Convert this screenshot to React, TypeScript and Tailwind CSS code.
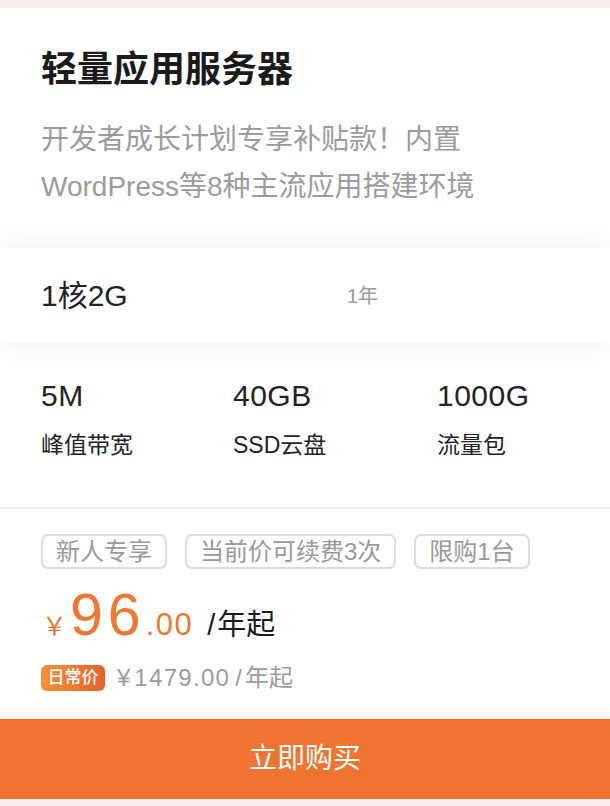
import React from "react";

const FONT = { fontFamily: '"Liberation Sans", "Noto Sans CJK SC", sans-serif' };

export default function App() {
  return (
    <div className="w-[610px] min-h-[806px] bg-[#f7eaea] flex flex-col" style={FONT}>
      <div className="h-[8px]" />
      <div className="bg-white flex flex-col">
        {/* header */}
        <div className="px-[41px] pt-[40px]">
          <div className="text-[36px] leading-[44px] font-bold text-[#1a1a1a]">轻量应用服务器</div>
          <div className="mt-[24px] text-[28px] leading-[47px] text-[#9b9b9b]">
            开发者成长计划专享补贴款！内置
            <br />
            WordPress等8种主流应用搭建环境
          </div>
        </div>

        {/* config row */}
        <div className="mt-[38px] h-[95px] bg-white flex items-center px-[41px] shadow-[0_0_32px_rgba(0,0,0,0.07)] relative">
          <div className="w-[306px] text-[30px] text-[#222]">1核2G</div>
          <div className="text-[20px] text-[#9b9b9b]">1年</div>
        </div>

        {/* specs */}
        <div className="flex px-[41px] pt-[35px] pb-[47px]">
          <div className="w-[192px] flex flex-col">
            <div className="text-[30px] leading-[36px] text-[#222] tracking-[0.5px]">5M</div>
            <div className="mt-[16px] text-[23px] leading-[30px] text-[#222]">峰值带宽</div>
          </div>
          <div className="w-[204px] flex flex-col">
            <div className="text-[30px] leading-[36px] text-[#222] tracking-[0.5px]">40GB</div>
            <div className="mt-[16px] text-[23px] leading-[30px] text-[#222]">SSD云盘</div>
          </div>
          <div className="flex-1 flex flex-col">
            <div className="text-[30px] leading-[36px] text-[#222] tracking-[0.5px]">1000G</div>
            <div className="mt-[16px] text-[23px] leading-[30px] text-[#222]">流量包</div>
          </div>
        </div>

        <div className="h-[2px] bg-[#ececec]" />

        {/* price */}
        <div className="px-[41px] pt-[25px]">
          <div className="flex gap-[18px]">
            <div className="h-[35px] px-[13px] border-2 border-[#dcdcdc] rounded-[7px] flex items-center text-[24px] text-[#999]">新人专享</div>
            <div className="h-[35px] px-[13px] border-2 border-[#dcdcdc] rounded-[7px] flex items-center text-[24px] text-[#999]">当前价可续费3次</div>
            <div className="h-[35px] px-[13px] border-2 border-[#dcdcdc] rounded-[7px] flex items-center text-[24px] text-[#999]">限购1台</div>
          </div>

          <div className="mt-[18px] h-[56px] flex items-baseline leading-[56px]">
            <span className="ml-[1px] text-[25px] text-[#f07634]" style={{ fontFamily: '"Noto Sans CJK SC", sans-serif' }}>￥</span>
            <span className="ml-[3px] text-[59px] tracking-[5px] text-[#f07634]">96</span>
            <span className="text-[31px] tracking-[1.5px] text-[#f07634]">.00</span>
            <span className="ml-[14px] text-[29px] text-[#1a1a1a]">/</span>
            <span className="ml-[2px] text-[29px] text-[#1a1a1a]">年起</span>
          </div>

          <div className="mt-[22px] h-[26px] flex items-center">
            <div className="h-[26px] w-[64px] rounded-[6px] bg-gradient-to-r from-[#f2923c] to-[#e8602a] flex items-center justify-center text-[17px] font-medium text-white">日常价</div>
            <div className="ml-[12px] flex items-baseline text-[24px] text-[#9b9b9b]">
              <span>¥</span>
              <span className="ml-[4px] tracking-[1.3px]">1479.00</span>
              <span className="ml-[5px]">/</span>
              <span className="ml-[3px]">年起</span>
            </div>
          </div>
        </div>

        <div className="mt-[28px] h-[80px] bg-[#ee7430] flex items-center justify-center text-[28px] text-white">立即购买</div>
      </div>
      <div className="h-[6px]" />
    </div>
  );
}
